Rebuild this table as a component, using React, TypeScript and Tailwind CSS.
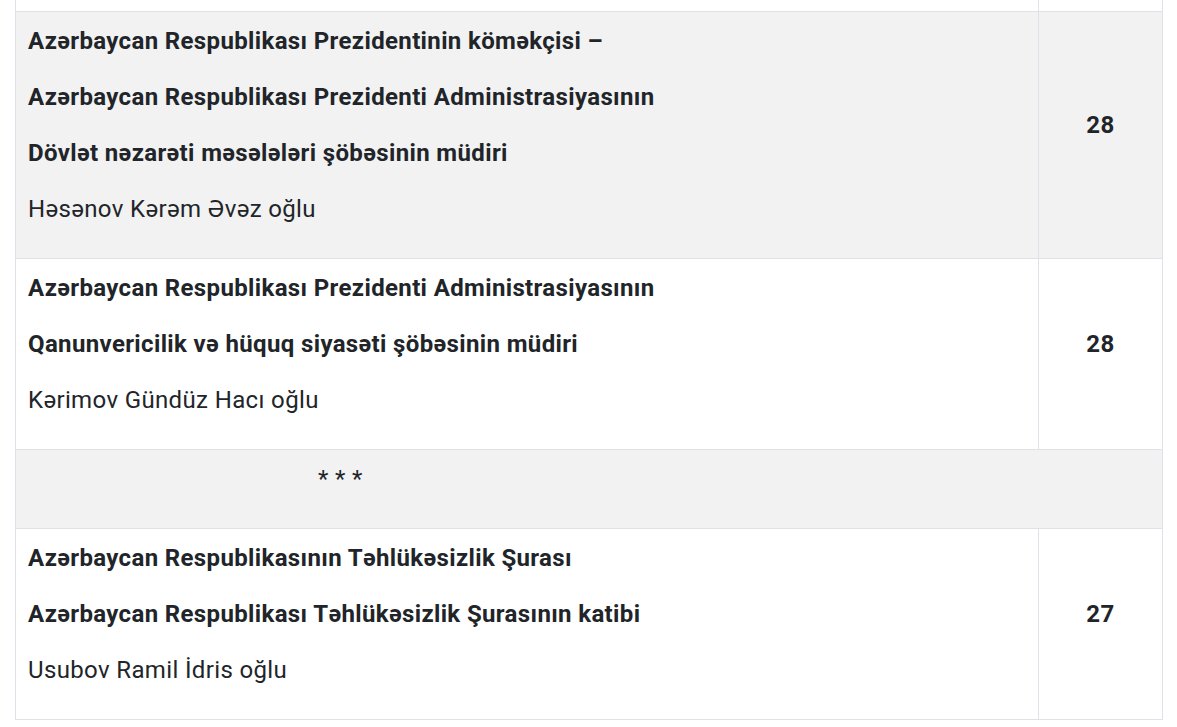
import React from "react";

type Row = { lines: string[]; name: string; num: string; shade: boolean };

const rows: Row[] = [
  {
    lines: [
      "Azərbaycan Respublikası Prezidentinin köməkçisi –",
      "Azərbaycan Respublikası Prezidenti Administrasiyasının",
      "Dövlət nəzarəti məsələləri şöbəsinin müdiri",
    ],
    name: "Həsənov Kərəm Əvəz oğlu",
    num: "28",
    shade: true,
  },
  {
    lines: [
      "Azərbaycan Respublikası Prezidenti Administrasiyasının",
      "Qanunvericilik və hüquq siyasəti şöbəsinin müdiri",
    ],
    name: "Kərimov Gündüz Hacı oğlu",
    num: "28",
    shade: false,
  },
];

const last: Row = {
  lines: [
    "Azərbaycan Respublikasının Təhlükəsizlik Şurası",
    "Azərbaycan Respublikası Təhlükəsizlik Şurasının katibi",
  ],
  name: "Usubov Ramil İdris oğlu",
  num: "27",
  shade: false,
};

const PersonRow = ({ row }: { row: Row }) => (
  <tr className={row.shade ? "bg-[#f2f2f2]" : "bg-white"}>
    <td className="border border-[#dee2e6] pl-[12px] pt-[1px] pb-[21px] align-top">
      {row.lines.map((l) => (
        <p key={l} className="font-bold leading-[56px]">{l}</p>
      ))}
      <p className="leading-[56px]">{row.name}</p>
    </td>
    <td className="border border-[#dee2e6] text-center align-middle font-bold pt-[1px] pb-[21px]">{row.num}</td>
  </tr>
);

export default function App() {
  return (
    <div className="w-[1177px] h-[727px] overflow-hidden bg-white pl-[15px] pr-[14px]">
      <table
        className="w-full border-collapse text-[24px] tracking-[0.36px] text-[#212529]"
        style={{ fontFamily: "Roboto, 'Noto Sans', sans-serif" }}
      >
        <colgroup>
          <col className="w-[1023px]" />
          <col />
        </colgroup>
        <tbody>
          <tr className="bg-white h-[11px]">
            <td className="border border-[#dee2e6] border-t-0 p-0"></td>
            <td className="border border-[#dee2e6] border-t-0 p-0"></td>
          </tr>
          {rows.map((r, i) => (
            <PersonRow key={i} row={r} />
          ))}
          <tr className="bg-[#f2f2f2]">
            <td colSpan={2} className="border border-[#dee2e6] pt-[1px] pb-[21px]">
              <p className="leading-[56px] pl-[302px]">* * *</p>
            </td>
          </tr>
          <PersonRow row={last} />
        </tbody>
      </table>
    </div>
  );
}
